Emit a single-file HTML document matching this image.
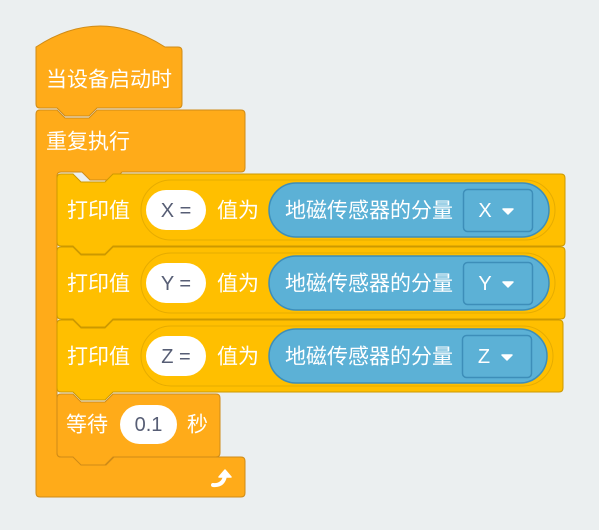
<!DOCTYPE html>
<html><head><meta charset="utf-8"><style>
html,body{margin:0;padding:0;background:#EBEFF0;}
svg{display:block}
text{font-family:"Liberation Sans","Noto Sans CJK SC",sans-serif;font-size:20px;fill:#fff;dominant-baseline:central}
</style></head><body>
<svg width="599" height="530" viewBox="0 0 599 530">
<path d="M40,110 H57 l8,8 h24 l8,-8 H241 Q245,110 245,114 V168 Q245,172 241,172 H122 l-8,8 h-24 l-8,-8 H61 Q57,172 57,176 V453 Q57,457 61,457 H78 l8,8 h20 l8,-8 H241 Q245,457 245,461 V493 Q245,497 241,497 H40 Q36,497 36,493 V114 Q36,110 40,110 Z" fill="#FFAB19" stroke="#CF8B17" stroke-width="1"/>
<path d="M36,47 Q100,5 165,47 H178 Q182,47 182,51 V104 Q182,108 178,108 H97 l-8,8 h-24 l-8,-8 H40 Q36,108 36,104 Z" fill="#FFAB19" stroke="#CF8B17" stroke-width="1"/>
<text x="46" y="80" style="font-size:21px">当设备启动时</text>
<text x="46" y="142" style="font-size:21px">重复执行</text>

<g id="p">
<path d="M61,174 H73 l8,8 h24 l8,-8 H561 Q565,174 565,178 V242 Q565,246 561,246 H113 l-8,8 h-24 l-8,-8 H61 Q57,246 57,242 V178 Q57,174 61,174 Z" fill="#FFBF00" stroke="#CC9900" stroke-width="1"/>
<rect x="141" y="180" width="414" height="60" rx="30" fill="#FFBF00" stroke="#E6AC00" stroke-width="1"/>
<rect x="146" y="190" width="60" height="40" rx="20" fill="#fff"/>
<rect x="269" y="183" width="280" height="54" rx="27" fill="#5CB1D6" stroke="#3D8EB9" stroke-width="1.5"/>
<rect x="463.5" y="189.5" width="69" height="42" rx="4" fill="#5CB1D6" stroke="#3D8EB9" stroke-width="1.5"/>
<path d="M503,209 h10 l-5,5 z" fill="#fff" stroke="#fff" stroke-width="1.5" stroke-linejoin="round"/>
<text x="67" y="211" style="font-size:21px">打印值</text>
<text x="217" y="211" style="font-size:21px">值为</text>
<text x="285" y="211" style="font-size:21px">地磁传感器的分量</text>
</g>
<text x="176" y="211" text-anchor="middle" style="fill:#575E75">X =</text>
<text x="485" y="211" text-anchor="middle">X</text>

<g transform="translate(0,73)"><use href="#p"/></g>
<text x="176" y="284" text-anchor="middle" style="fill:#575E75">Y =</text>
<text x="485" y="284" text-anchor="middle">Y</text>

<g transform="translate(0,146)">
<path d="M61,174 H73 l8,8 h24 l8,-8 H559 Q563,174 563,178 V242 Q563,246 559,246 H113 l-8,8 h-24 l-8,-8 H61 Q57,246 57,242 V178 Q57,174 61,174 Z" fill="#FFBF00" stroke="#CC9900" stroke-width="1"/>
<rect x="141" y="180" width="412" height="60" rx="30" fill="#FFBF00" stroke="#E6AC00" stroke-width="1"/>
<rect x="146" y="190" width="60" height="40" rx="20" fill="#fff"/>
<rect x="269" y="183" width="278" height="54" rx="27" fill="#5CB1D6" stroke="#3D8EB9" stroke-width="1.5"/>
<rect x="462.5" y="189.5" width="69" height="42" rx="4" fill="#5CB1D6" stroke="#3D8EB9" stroke-width="1.5"/>
<path d="M502,209 h10 l-5,5 z" fill="#fff" stroke="#fff" stroke-width="1.5" stroke-linejoin="round"/>
<text x="67" y="211" style="font-size:21px">打印值</text>
<text x="217" y="211" style="font-size:21px">值为</text>
<text x="285" y="211" style="font-size:21px">地磁传感器的分量</text>
</g>
<text x="176" y="357" text-anchor="middle" style="fill:#575E75">Z =</text>
<text x="484" y="357" text-anchor="middle">Z</text>

<path d="M61,394 H73 l8,8 h24 l8,-8 H216 Q220,394 220,398 V453 Q220,457 216,457 H113 l-8,8 h-24 l-8,-8 H61 Q57,457 57,453 V398 Q57,394 61,394 Z" fill="#FFAB19" stroke="#CF8B17" stroke-width="1"/>
<rect x="120" y="405" width="57" height="39" rx="19.5" fill="#fff"/>
<text x="66" y="425" style="font-size:21px">等待</text>
<text x="148.5" y="425" text-anchor="middle" style="fill:#575E75">0.1</text>
<text x="187" y="425" style="font-size:21px">秒</text>

<path d="M213,485 Q223,486 225,476" fill="none" stroke="#fff" stroke-width="4" stroke-linecap="round"/>
<path d="M219,477 L225,470 L231,477 Z" fill="#fff" stroke="#fff" stroke-width="1.5" stroke-linejoin="round"/>
</svg>
</body></html>
